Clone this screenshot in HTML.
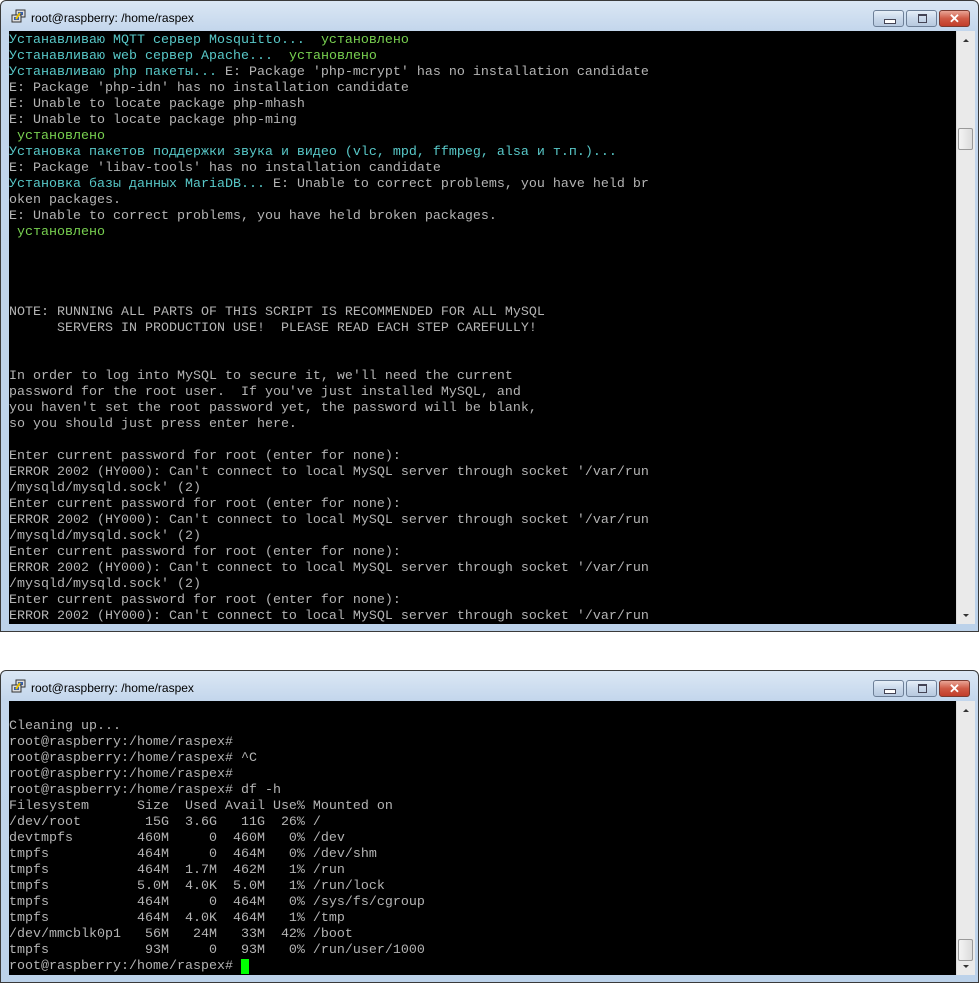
<!DOCTYPE html>
<html><head><meta charset="utf-8"><style>
body{margin:0;width:979px;height:985px;background:#fff;position:relative;overflow:hidden;font-family:"Liberation Sans",sans-serif}
.win{position:absolute;left:0;width:979px;border:1px solid #3a3a3a;border-radius:6px 6px 0 0;background:linear-gradient(#dbe7f4,#c3d6ec 30px,#bcd2ea);box-sizing:border-box}
.title{position:absolute;left:30px;top:10px;font-size:12px;color:#000}
.ico{position:absolute;left:10px;top:8px;width:16px;height:14px}
.btn{position:absolute;top:9px;height:17px;border:1px solid #6d7f97;border-radius:3px;background:linear-gradient(#e6eef8,#c9d8ea 50%,#b7c9df);box-sizing:border-box}
.cls{background:linear-gradient(#e9a596,#cf5a45 50%,#c23d2a);border-color:#7a3a30}
.term{position:absolute;left:8px;background:#000;font-family:"Liberation Mono",monospace;font-size:13.33px;line-height:16px;color:#b4b4b4;white-space:pre;overflow:hidden}
.sb{position:absolute;left:955px;width:18px;background:#eaeaea;border-left:1px solid #ddd}
.thumb{position:absolute;left:1px;width:15px;height:22px;border:1px solid #999;border-radius:2px;background:linear-gradient(90deg,#f4f4f4,#dcdcdc);box-sizing:border-box}
.c{color:#58c8c8}.g{color:#78d050}
</style></head><body>

<div class="win" style="top:0;height:632px">
<svg class="ico" viewBox="0 0 16 14"><rect x="5" y="1" width="9" height="7" fill="#ddd" stroke="#333"/><rect x="7" y="3" width="5" height="3" fill="#3a5fa8"/><rect x="1" y="6" width="9" height="7" fill="#ddd" stroke="#333"/><rect x="3" y="8" width="5" height="3" fill="#3a5fa8"/><path d="M9 4 L5 10" stroke="#e8c000" stroke-width="2"/></svg>
<div class="title">root@raspberry: /home/raspex</div>
<div class="btn" style="left:872px;width:31px"><div style="position:absolute;left:10px;top:8px;width:10px;height:3px;border:1px solid #445;background:#fff"></div></div>
<div class="btn" style="left:905px;width:31px"><div style="position:absolute;left:11px;top:3px;width:7px;height:6px;border:1px solid #445;border-top-width:2px"></div></div>
<div class="btn cls" style="left:938px;width:31px;color:#fff;font-weight:bold;font-size:13px;text-align:center;line-height:15px">✕</div>
<div class="term" style="top:30px;width:947px;height:591px;padding-top:2px"><span class="c">Устанавливаю MQTT сервер Mosquitto...</span>  <span class="g">установлено</span>
<span class="c">Устанавливаю web сервер Apache...</span>  <span class="g">установлено</span>
<span class="c">Устанавливаю php пакеты...</span> E: Package 'php-mcrypt' has no installation candidate
E: Package 'php-idn' has no installation candidate
E: Unable to locate package php-mhash
E: Unable to locate package php-ming
 <span class="g">установлено</span>
<span class="c">Установка пакетов поддержки звука и видео (vlc, mpd, ffmpeg, alsa и т.п.)...</span>
E: Package 'libav-tools' has no installation candidate
<span class="c">Установка базы данных MariaDB...</span> E: Unable to correct problems, you have held br
oken packages.
E: Unable to correct problems, you have held broken packages.
 <span class="g">установлено</span>




NOTE: RUNNING ALL PARTS OF THIS SCRIPT IS RECOMMENDED FOR ALL MySQL
      SERVERS IN PRODUCTION USE!  PLEASE READ EACH STEP CAREFULLY!


In order to log into MySQL to secure it, we'll need the current
password for the root user.  If you've just installed MySQL, and
you haven't set the root password yet, the password will be blank,
so you should just press enter here.

Enter current password for root (enter for none):
ERROR 2002 (HY000): Can't connect to local MySQL server through socket '/var/run
/mysqld/mysqld.sock' (2)
Enter current password for root (enter for none):
ERROR 2002 (HY000): Can't connect to local MySQL server through socket '/var/run
/mysqld/mysqld.sock' (2)
Enter current password for root (enter for none):
ERROR 2002 (HY000): Can't connect to local MySQL server through socket '/var/run
/mysqld/mysqld.sock' (2)
Enter current password for root (enter for none):
ERROR 2002 (HY000): Can't connect to local MySQL server through socket '/var/run</div>
<div class="sb" style="top:30px;height:593px">
<div style="position:absolute;left:6px;top:8px;border:3px solid transparent;border-bottom:3px solid #333;border-top:0"></div>
<div class="thumb" style="top:97px"></div>
<div style="position:absolute;left:6px;top:583px;border:3px solid transparent;border-top:3px solid #333;border-bottom:0"></div>
</div>
</div>

<div class="win" style="top:670px;height:313px">
<svg class="ico" viewBox="0 0 16 14"><rect x="5" y="1" width="9" height="7" fill="#ddd" stroke="#333"/><rect x="7" y="3" width="5" height="3" fill="#3a5fa8"/><rect x="1" y="6" width="9" height="7" fill="#ddd" stroke="#333"/><rect x="3" y="8" width="5" height="3" fill="#3a5fa8"/><path d="M9 4 L5 10" stroke="#e8c000" stroke-width="2"/></svg>
<div class="title">root@raspberry: /home/raspex</div>
<div class="btn" style="left:872px;width:31px"><div style="position:absolute;left:10px;top:8px;width:10px;height:3px;border:1px solid #445;background:#fff"></div></div>
<div class="btn" style="left:905px;width:31px"><div style="position:absolute;left:11px;top:3px;width:7px;height:6px;border:1px solid #445;border-top-width:2px"></div></div>
<div class="btn cls" style="left:938px;width:31px;color:#fff;font-weight:bold;font-size:13px;text-align:center;line-height:15px">✕</div>
<div class="term" style="top:30px;width:947px;height:272px;padding-top:2px">
Cleaning up...
root@raspberry:/home/raspex#
root@raspberry:/home/raspex# ^C
root@raspberry:/home/raspex#
root@raspberry:/home/raspex# df -h
Filesystem      Size  Used Avail Use% Mounted on
/dev/root        15G  3.6G   11G  26% /
devtmpfs        460M     0  460M   0% /dev
tmpfs           464M     0  464M   0% /dev/shm
tmpfs           464M  1.7M  462M   1% /run
tmpfs           5.0M  4.0K  5.0M   1% /run/lock
tmpfs           464M     0  464M   0% /sys/fs/cgroup
tmpfs           464M  4.0K  464M   1% /tmp
/dev/mmcblk0p1   56M   24M   33M  42% /boot
tmpfs            93M     0   93M   0% /run/user/1000
root@raspberry:/home/raspex# <span style="background:#00ff00"> </span></div>
<div class="sb" style="top:30px;height:274px">
<div style="position:absolute;left:6px;top:8px;border:3px solid transparent;border-bottom:3px solid #333;border-top:0"></div>
<div class="thumb" style="top:238px"></div>
<div style="position:absolute;left:6px;top:264px;border:3px solid transparent;border-top:3px solid #333;border-bottom:0"></div>
</div>
</div>
</body></html>
